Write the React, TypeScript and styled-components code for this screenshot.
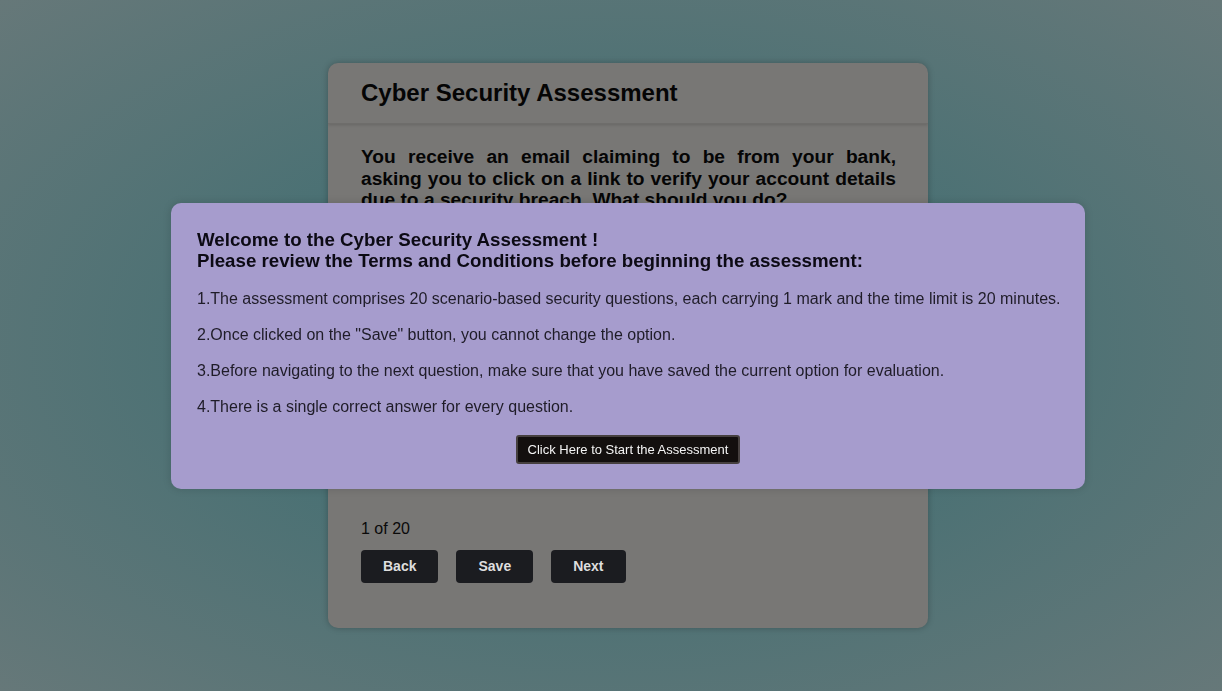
import React from 'react';
import styled, { createGlobalStyle } from 'styled-components';

const GlobalStyle = createGlobalStyle`
  html, body {
    margin: 0;
    padding: 0;
    height: 100%;
  }
  body {
    font-family: 'Liberation Sans', Arial, Helvetica, sans-serif;
  }
`;

const Page = styled.div`
  min-height: 100vh;
  box-sizing: border-box;
  display: flex;
  justify-content: center;
  align-items: flex-start;
  padding: 63px 0 0 34px;
  background: radial-gradient(ellipse at 50% 50%, #3e6d72 0%, #4b7174 45%, #667879 100%);
`;

const Card = styled.div`
  width: 600px;
  height: 565px;
  background: #787775;
  border-radius: 10px;
  box-shadow: 0 0 6px rgba(0, 0, 0, 0.25);
  display: flex;
  flex-direction: column;
  overflow: hidden;
`;

const CardHeader = styled.header`
  height: 60px;
  display: flex;
  align-items: center;
  padding: 0 33px;
  border-bottom: 1px solid #6e6d6b;
  box-shadow: 0 1px 3px rgba(0, 0, 0, 0.15);
`;

const CardTitle = styled.h1`
  margin: 0;
  font-size: 24px;
  font-weight: 700;
  color: #050505;
`;

const CardBody = styled.div`
  flex: 1;
  padding: 22px 32px 0 33px;
  display: flex;
  flex-direction: column;
`;

const Question = styled.p`
  margin: 0;
  font-size: 19.2px;
  font-weight: 700;
  line-height: 21.5px;
  text-align: justify;
  color: #050505;
`;

const OptionsArea = styled.div`
  margin-top: 24px;
  height: 285px;
`;

const Counter = styled.div`
  font-size: 16px;
  color: #0a0a0a;
  margin-bottom: 12px;
`;

const ButtonRow = styled.div`
  display: flex;
  gap: 18px;
`;

const NavButton = styled.button`
  height: 33px;
  padding: 0 22px;
  border: none;
  border-radius: 4px;
  background: #1b1c20;
  color: #dedede;
  font-family: 'Liberation Sans', Arial, sans-serif;
  font-size: 14px;
  font-weight: 700;
`;

const Overlay = styled.div`
  position: fixed;
  inset: 0;
`;

const Modal = styled.div`
  position: absolute;
  left: 171px;
  top: 50%;
  transform: translateY(-50%);
  width: 914px;
  box-sizing: border-box;
  padding: 26px 14px 25px 26px;
  background: #a69ccd;
  border-radius: 10px;
  box-shadow: 0 0 8px rgba(0, 0, 0, 0.15);
`;

const ModalTitle = styled.h3`
  margin: 0 0 18px;
  font-size: 18.72px;
  font-weight: 700;
  line-height: 21px;
  color: #0c0a14;
`;

const Rule = styled.p`
  margin: 0 0 16px;
  font-size: 16px;
  line-height: 20px;
  color: #1f1c28;
`;

const StartRow = styled.div`
  display: flex;
  justify-content: center;
  margin-top: 18px;
  padding-right: 12px;
`;

const StartButton = styled.button`
  height: 29px;
  padding: 0 10px;
  background: #130f0e;
  color: #f4f4f4;
  border: 2px solid #46403f;
  border-radius: 3px;
  font-family: 'Liberation Sans', Arial, sans-serif;
  font-size: 13px;
`;

export default function App() {
  const rules = [
    '1.The assessment comprises 20 scenario-based security questions, each carrying 1 mark and the time limit is 20 minutes.',
    '2.Once clicked on the "Save" button, you cannot change the option.',
    '3.Before navigating to the next question, make sure that you have saved the current option for evaluation.',
    '4.There is a single correct answer for every question.',
  ];

  return (
    <>
      <GlobalStyle />
      <Page>
        <Card>
          <CardHeader>
            <CardTitle>Cyber Security Assessment</CardTitle>
          </CardHeader>
          <CardBody>
            <Question>
              You receive an email claiming to be from your bank, asking you to click on a link to verify your
              account details due to a security breach. What should you do?
            </Question>
            <OptionsArea />
            <Counter>1 of 20</Counter>
            <ButtonRow>
              <NavButton>Back</NavButton>
              <NavButton>Save</NavButton>
              <NavButton>Next</NavButton>
            </ButtonRow>
          </CardBody>
        </Card>
      </Page>
      <Overlay>
        <Modal>
          <ModalTitle>
            Welcome to the Cyber Security Assessment !<br />
            Please review the Terms and Conditions before beginning the assessment:
          </ModalTitle>
          {rules.map((rule) => (
            <Rule key={rule}>{rule}</Rule>
          ))}
          <StartRow>
            <StartButton>Click Here to Start the Assessment</StartButton>
          </StartRow>
        </Modal>
      </Overlay>
    </>
  );
}
